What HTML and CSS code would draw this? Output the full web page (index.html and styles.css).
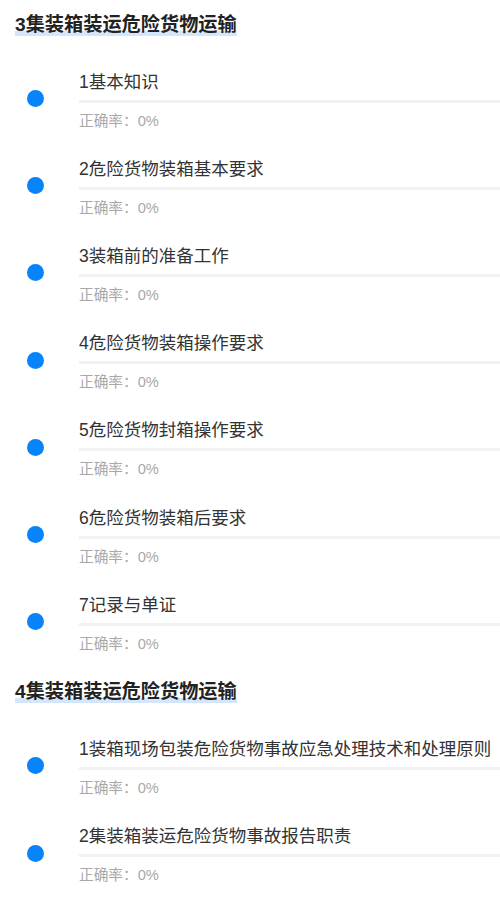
FILE: index.html
```html
<!DOCTYPE html>
<html lang="zh-CN">

<head>
    <meta charset="UTF-8" />
    <title>章节练习</title>
    <meta name="viewport" content="width=device-width, initial-scale=1" />
    <link rel="stylesheet" href="styles.css">
</head>

<body>
    <div class="chapter">
        <div class="chapter-title"><span>3集装箱装运危险货物运输</span></div>
        <ul class="lesson-list">
            <li class="lesson">
                <span class="dot"></span>
                <div class="lesson-info">
                    <div class="lesson-name">1基本知识</div>
                    <div class="progress"></div>
                    <div class="rate">正确率：0%</div>
                </div>
            </li>
            <li class="lesson">
                <span class="dot"></span>
                <div class="lesson-info">
                    <div class="lesson-name">2危险货物装箱基本要求</div>
                    <div class="progress"></div>
                    <div class="rate">正确率：0%</div>
                </div>
            </li>
            <li class="lesson">
                <span class="dot"></span>
                <div class="lesson-info">
                    <div class="lesson-name">3装箱前的准备工作</div>
                    <div class="progress"></div>
                    <div class="rate">正确率：0%</div>
                </div>
            </li>
            <li class="lesson">
                <span class="dot"></span>
                <div class="lesson-info">
                    <div class="lesson-name">4危险货物装箱操作要求</div>
                    <div class="progress"></div>
                    <div class="rate">正确率：0%</div>
                </div>
            </li>
            <li class="lesson">
                <span class="dot"></span>
                <div class="lesson-info">
                    <div class="lesson-name">5危险货物封箱操作要求</div>
                    <div class="progress"></div>
                    <div class="rate">正确率：0%</div>
                </div>
            </li>
            <li class="lesson">
                <span class="dot"></span>
                <div class="lesson-info">
                    <div class="lesson-name">6危险货物装箱后要求</div>
                    <div class="progress"></div>
                    <div class="rate">正确率：0%</div>
                </div>
            </li>
            <li class="lesson">
                <span class="dot"></span>
                <div class="lesson-info">
                    <div class="lesson-name">7记录与单证</div>
                    <div class="progress"></div>
                    <div class="rate">正确率：0%</div>
                </div>
            </li>
        </ul>
    </div>

    <div class="chapter">
        <div class="chapter-title"><span>4集装箱装运危险货物运输</span></div>
        <ul class="lesson-list">
            <li class="lesson">
                <span class="dot"></span>
                <div class="lesson-info">
                    <div class="lesson-name">1装箱现场包装危险货物事故应急处理技术和处理原则</div>
                    <div class="progress"></div>
                    <div class="rate">正确率：0%</div>
                </div>
            </li>
            <li class="lesson">
                <span class="dot"></span>
                <div class="lesson-info">
                    <div class="lesson-name">2集装箱装运危险货物事故报告职责</div>
                    <div class="progress"></div>
                    <div class="rate">正确率：0%</div>
                </div>
            </li>
        </ul>
    </div>
</body>

</html>
```

FILE: styles.css
```css
body,
html {
    font-family: "Liberation Sans", "Noto Sans CJK SC", sans-serif;
    background-color: #fff;
    margin: 0;
    padding: 0;
    color: #333;
}

.chapter {
    padding-top: 14px;
}

.chapter-title {
    display: flex;
    padding: 0 15px;
    margin-bottom: 21px;
}

.chapter-title span {
    display: inline-block;
    font-size: 19.2px;
    line-height: 22px;
    font-weight: bold;
    color: #222;
    background: linear-gradient(to top, #d3e6fb 5px, transparent 5px);
}

.lesson-list {
    list-style: none;
    margin: 0;
    padding: 0;
}

.lesson {
    display: flex;
    align-items: flex-start;
    padding: 13.6px 0;
}

.dot {
    flex: none;
    width: 17px;
    height: 17px;
    border-radius: 50%;
    background-color: #0784fa;
    margin: 19.5px 35px 0 27px;
}

.lesson-info {
    flex: 1;
    min-width: 0;
}

.lesson-name {
    font-size: 17.5px;
    line-height: 22px;
    color: #333;
    white-space: nowrap;
}

.progress {
    height: 3px;
    margin-top: 7px;
    background-color: #f2f2f2;
}

.rate {
    margin-top: 8px;
    font-size: 14.67px;
    line-height: 20px;
    color: #a8a8a8;
}
```
